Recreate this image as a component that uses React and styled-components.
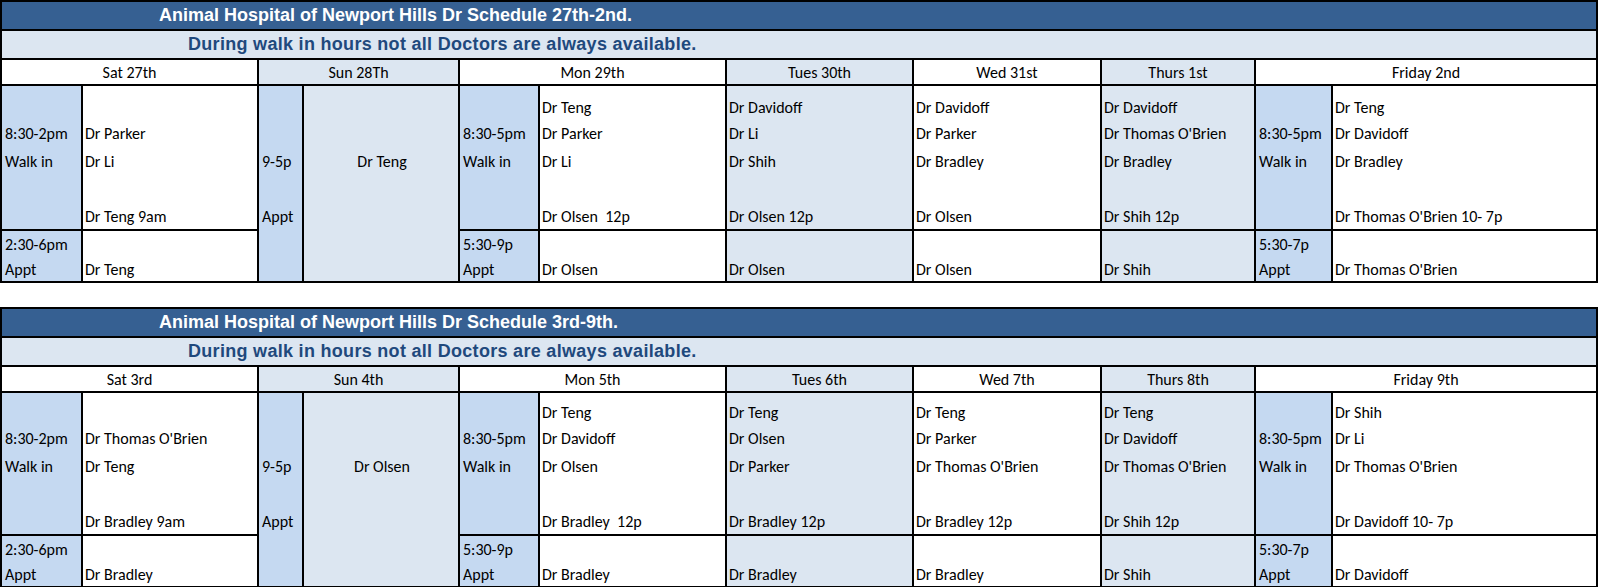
import React from 'react'
import styled, { createGlobalStyle } from 'styled-components'

const GlobalStyle = createGlobalStyle`
  html, body {
    margin: 0;
    padding: 0;
    background: #fff;
    overflow: hidden;
  }
  body {
    font-family: "Carlito", "Lato", "Liberation Sans", sans-serif;
  }
`

// spreadsheet colours
const DARK = '#366092'
const LIGHT = '#dce6f1'
const LABEL = '#c5d9f1'

const TOP_SLOTS = [26, 26, 29, 28, 25]
const BOTTOM_SLOTS = [26, 23]

const Page = styled.div`
  width: 1600px;
  height: 587px;
  overflow: hidden;
`

const Sheet = styled.div`
  display: grid;
  grid-template-columns: 79px 174px 43px 154px 78px 185px 185px 186px 152px 75px 263px;
  grid-template-rows: 27px 27px 24px ${(p) => p.$topH}px 50px;
  gap: 2px;
  padding: 2px;
  width: 1598px;
  box-sizing: border-box;
  background: #000;
  margin-top: ${(p) => p.$mt}px;
`

const Title = styled.div`
  grid-column: 1 / -1;
  background: ${DARK};
  color: #fff;
  font-family: "Liberation Sans", Arial, sans-serif;
  font-weight: bold;
  font-size: 18px;
  display: flex;
  align-items: center;
  padding-left: 157px;
  white-space: nowrap;
`

const Notice = styled.div`
  grid-column: 1 / -1;
  background: ${LIGHT};
  color: #1f497d;
  font-family: "Liberation Sans", Arial, sans-serif;
  font-weight: bold;
  font-size: 18px;
  letter-spacing: 0.3px;
  display: flex;
  align-items: center;
  padding-left: 186px;
  white-space: nowrap;
`

const DayHead = styled.div`
  grid-column: ${(p) => p.$col};
  background: ${(p) => (p.$shade ? LIGHT : '#fff')};
  display: flex;
  align-items: center;
  justify-content: center;
  font-size: 16px;
  color: #000;
  white-space: nowrap;
`

const Cell = styled.div`
  grid-column: ${(p) => p.$col};
  grid-row: ${(p) => p.$row};
  background: ${(p) => p.$bg};
  display: flex;
  flex-direction: column;
  padding: ${(p) => p.$pt}px 0 0 ${(p) => (p.$label ? 3 : 2)}px;
  overflow: hidden;
  align-items: ${(p) => (p.$center ? 'center' : 'stretch')};
`

const Slot = styled.div`
  height: ${(p) => p.$h}px;
  line-height: ${(p) => p.$h}px;
  font-size: 16px;
  color: #000;
  white-space: pre;
`

function Lines({ items, slots }) {
  return slots.map((h, i) => (
    <Slot key={i} $h={h}>
      {items[i] || ''}
    </Slot>
  ))
}

const weeks = [
  {
    title: 'Animal Hospital of Newport Hills Dr Schedule 27th-2nd.',
    topH: 143,
    mt: 0,
    sat: {
      name: 'Sat 27th',
      top: ['', 'Dr Parker', 'Dr Li', '', 'Dr Teng 9am'],
      bottom: ['', 'Dr Teng'],
    },
    sun: { name: 'Sun 28Th', doc: 'Dr Teng' },
    mon: {
      name: 'Mon 29th',
      top: ['Dr Teng', 'Dr Parker', 'Dr Li', '', 'Dr Olsen  12p'],
      bottom: ['', 'Dr Olsen'],
    },
    tue: {
      name: 'Tues 30th',
      top: ['Dr Davidoff', 'Dr Li', 'Dr Shih', '', 'Dr Olsen 12p'],
      bottom: ['', 'Dr Olsen'],
    },
    wed: {
      name: 'Wed 31st',
      top: ['Dr Davidoff', 'Dr Parker', 'Dr Bradley', '', 'Dr Olsen'],
      bottom: ['', 'Dr Olsen'],
    },
    thu: {
      name: 'Thurs 1st',
      top: ['Dr Davidoff', "Dr Thomas O'Brien", 'Dr Bradley', '', 'Dr Shih 12p'],
      bottom: ['', 'Dr Shih'],
    },
    fri: {
      name: 'Friday 2nd',
      top: ['Dr Teng', 'Dr Davidoff', 'Dr Bradley', '', "Dr Thomas O'Brien 10- 7p"],
      bottom: ['', "Dr Thomas O'Brien"],
    },
  },
  {
    title: 'Animal Hospital of Newport Hills Dr Schedule 3rd-9th.',
    topH: 141,
    mt: 24,
    sat: {
      name: 'Sat 3rd',
      top: ['', "Dr Thomas O'Brien", 'Dr Teng', '', 'Dr Bradley 9am'],
      bottom: ['', 'Dr Bradley'],
    },
    sun: { name: 'Sun 4th', doc: 'Dr Olsen' },
    mon: {
      name: 'Mon 5th',
      top: ['Dr Teng', 'Dr Davidoff', 'Dr Olsen', '', 'Dr Bradley  12p'],
      bottom: ['', 'Dr Bradley'],
    },
    tue: {
      name: 'Tues 6th',
      top: ['Dr Teng', 'Dr Olsen', 'Dr Parker', '', 'Dr Bradley 12p'],
      bottom: ['', 'Dr Bradley'],
    },
    wed: {
      name: 'Wed 7th',
      top: ['Dr Teng', 'Dr Parker', "Dr Thomas O'Brien", '', 'Dr Bradley 12p'],
      bottom: ['', 'Dr Bradley'],
    },
    thu: {
      name: 'Thurs 8th',
      top: ['Dr Teng', 'Dr Davidoff', "Dr Thomas O'Brien", '', 'Dr Shih 12p'],
      bottom: ['', 'Dr Shih'],
    },
    fri: {
      name: 'Friday 9th',
      top: ['Dr Shih', 'Dr Li', "Dr Thomas O'Brien", '', 'Dr Davidoff 10- 7p'],
      bottom: ['', 'Dr Davidoff'],
    },
  },
]

function Week({ w }) {
  const pt = w.topH - 134
  // day with its own time label column (Sat, Mon, Fri)
  const labelled = (day, labelCol, docCol, walkIn, appt) => [
    <Cell key={day.name + 'lt'} $col={labelCol} $row={4} $bg={LABEL} $pt={pt} $label>
      <Lines items={['', walkIn, 'Walk in']} slots={TOP_SLOTS} />
    </Cell>,
    <Cell key={day.name + 'dt'} $col={docCol} $row={4} $bg="#fff" $pt={pt}>
      <Lines items={day.top} slots={TOP_SLOTS} />
    </Cell>,
    <Cell key={day.name + 'lb'} $col={labelCol} $row={5} $bg={LABEL} $pt={1} $label>
      <Lines items={[appt, 'Appt']} slots={BOTTOM_SLOTS} />
    </Cell>,
    <Cell key={day.name + 'db'} $col={docCol} $row={5} $bg="#fff" $pt={1}>
      <Lines items={day.bottom} slots={BOTTOM_SLOTS} />
    </Cell>,
  ]
  const plain = (day, col, bg) => [
    <Cell key={day.name + 't'} $col={col} $row={4} $bg={bg} $pt={pt}>
      <Lines items={day.top} slots={TOP_SLOTS} />
    </Cell>,
    <Cell key={day.name + 'b'} $col={col} $row={5} $bg={bg} $pt={1}>
      <Lines items={day.bottom} slots={BOTTOM_SLOTS} />
    </Cell>,
  ]

  return (
    <Sheet $topH={w.topH} $mt={w.mt}>
      <Title>{w.title}</Title>
      <Notice>During walk in hours not all Doctors are always available.</Notice>

      <DayHead $col="1 / 3">{w.sat.name}</DayHead>
      <DayHead $col="3 / 5" $shade>{w.sun.name}</DayHead>
      <DayHead $col="5 / 7">{w.mon.name}</DayHead>
      <DayHead $col="7" $shade>{w.tue.name}</DayHead>
      <DayHead $col="8">{w.wed.name}</DayHead>
      <DayHead $col="9" $shade>{w.thu.name}</DayHead>
      <DayHead $col="10 / 12">{w.fri.name}</DayHead>

      {labelled(w.sat, 1, 2, '8:30-2pm', '2:30-6pm')}

      <Cell $col={3} $row="4 / 6" $bg={LABEL} $pt={pt} $label>
        <Lines items={['', '', '9-5p', '', 'Appt']} slots={TOP_SLOTS} />
      </Cell>
      <Cell $col={4} $row="4 / 6" $bg={LIGHT} $pt={pt} $center>
        <Lines items={['', '', w.sun.doc]} slots={TOP_SLOTS} />
      </Cell>

      {labelled(w.mon, 5, 6, '8:30-5pm', '5:30-9p')}
      {plain(w.tue, 7, LIGHT)}
      {plain(w.wed, 8, '#fff')}
      {plain(w.thu, 9, LIGHT)}
      {labelled(w.fri, 10, 11, '8:30-5pm', '5:30-7p')}
    </Sheet>
  )
}

export default function App() {
  return (
    <Page>
      <GlobalStyle />
      {weeks.map((w) => (
        <Week key={w.title} w={w} />
      ))}
    </Page>
  )
}
